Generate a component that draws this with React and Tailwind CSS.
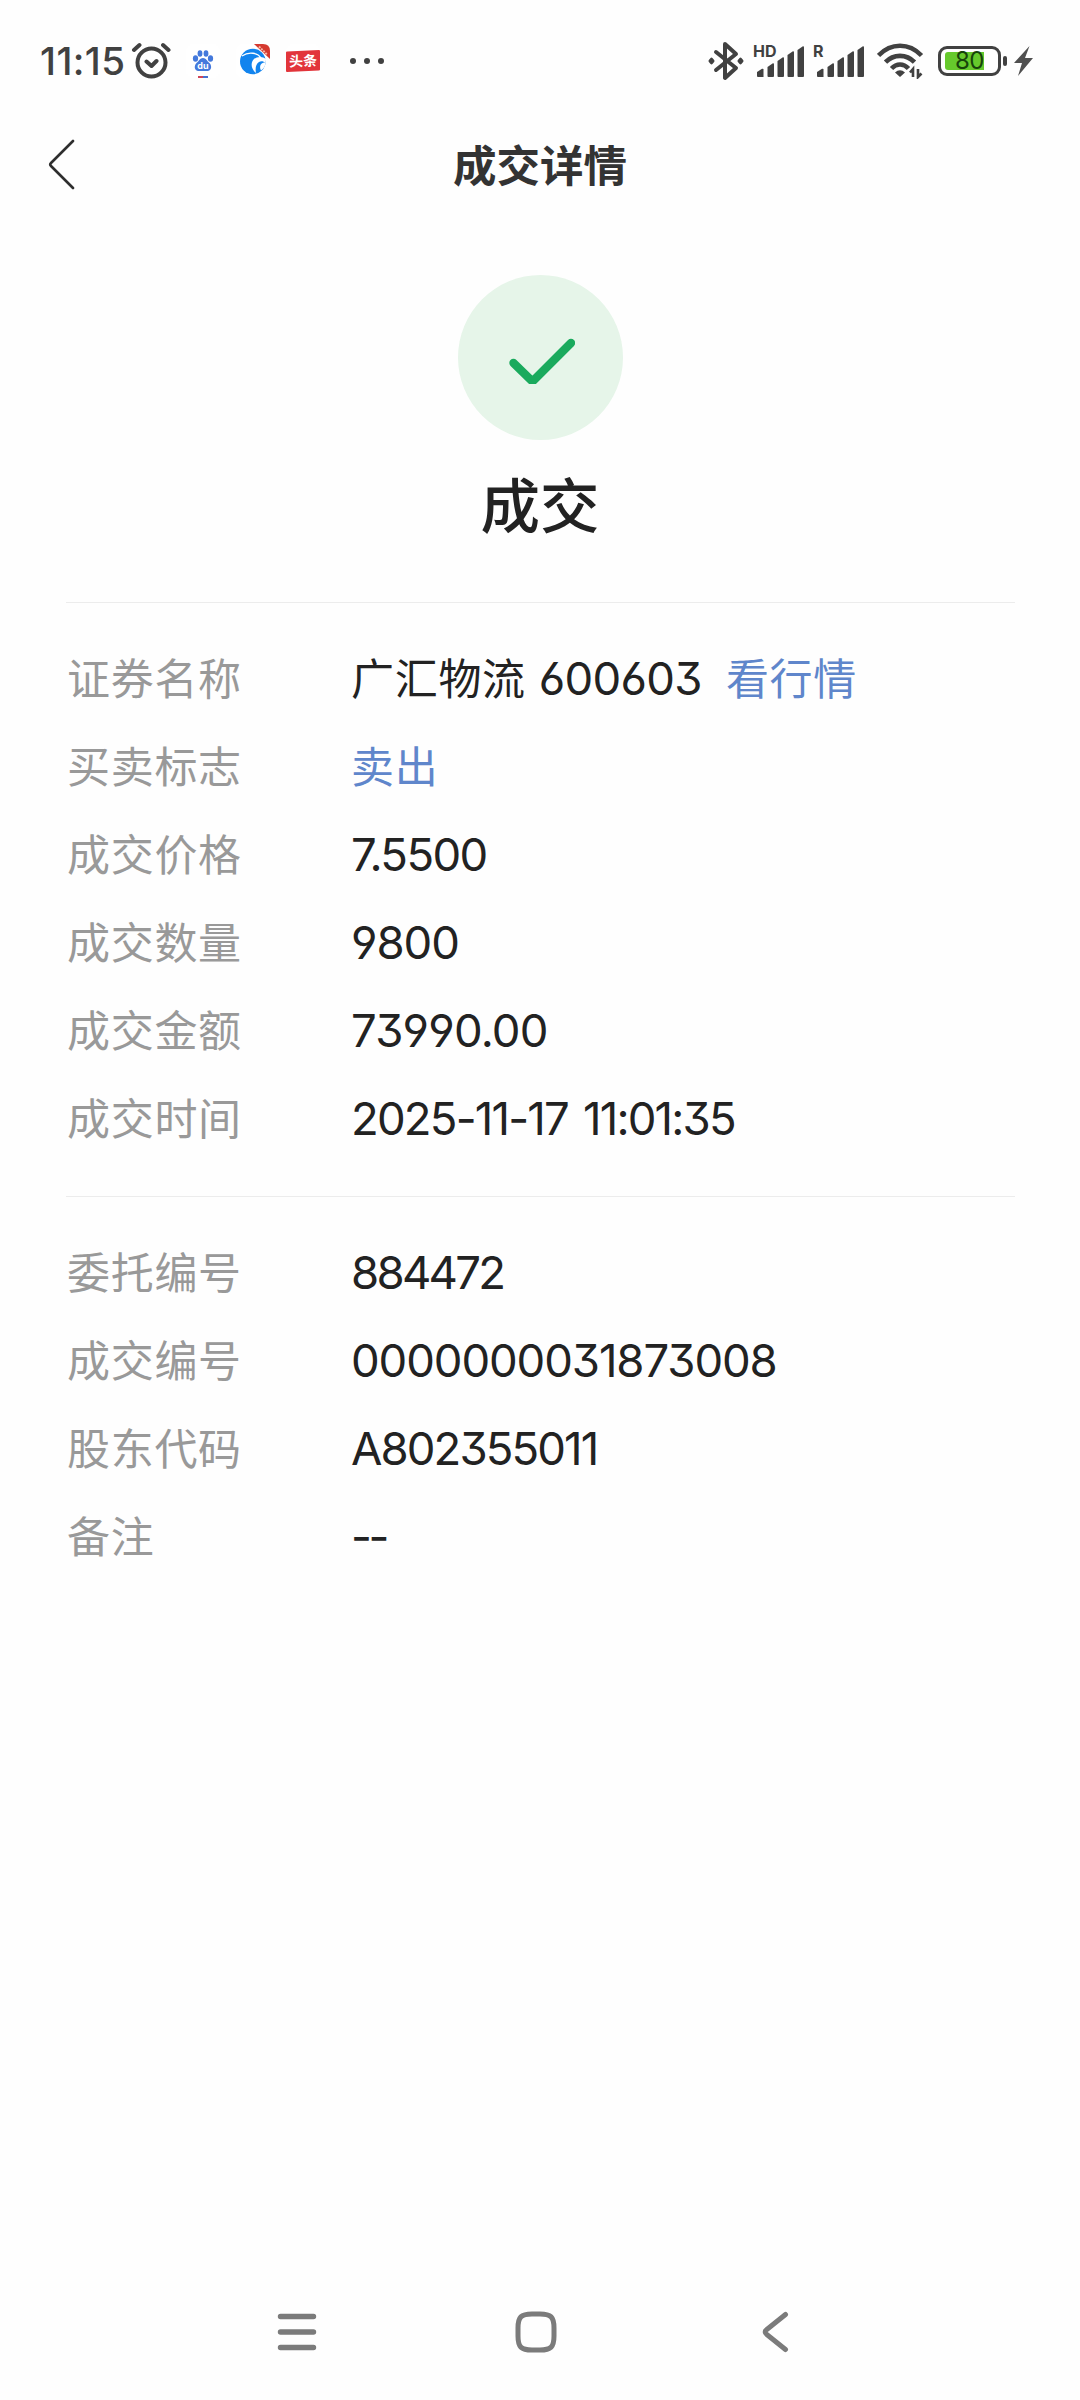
const tradeRows = [
  { label: '成交价格', value: '7.5500', tracking: 'tracking-[-1.600px]' },
  { label: '成交数量', value: '9800', tracking: 'tracking-[-1px]' },
  { label: '成交金额', value: '73990.00', tracking: 'tracking-[-0.800px]' },
  { label: '成交时间', value: '2025-11-17 11:01:35', tracking: 'tracking-[-1.800px] [word-spacing:4px]' },
];

const orderRows = [
  { label: '委托编号', value: '884472', tracking: 'tracking-[-2.700px]' },
  { label: '成交编号', value: '0000000031873008', tracking: 'tracking-[-1.100px]' },
  { label: '股东代码', value: 'A802355011', tracking: 'tracking-[-1.900px]' },
  { label: '备注', value: '--', tracking: 'tracking-[-3.500px]' },
];

function SignalIcon({ label, className }) {
  return (
    <svg className={className} width="50" height="36" viewBox="0 0 50 36" fill="#414141">
      <text x="-3" y="14" fontSize="16" fontWeight="700" fontFamily="Inter, sans-serif">{label}</text>
      <path d="M1 29l5-3.200q1.500-.5 1.500 .8V34H2q-1 0-1-1z" />
      <path d="M11.500 24l5-3.500q1.500-.5 1.500 .8V33q0 1-1 1h-4.500q-1 0-1-1z" />
      <path d="M21.500 18l5-3.500q1.500-.5 1.500 .8V33q0 1-1 1h-4.500q-1 0-1-1z" />
      <path d="M31.500 12l5-3.500q1.500-.5 1.500 .8V33q0 1-1 1h-4.500q-1 0-1-1z" />
      <path d="M41.500 7l5-3.500q1.500-.5 1.500 .8V33q0 1-1 1h-4.500q-1 0-1-1z" />
    </svg>
  );
}

function StatusBar() {
  return (
    <div className="flex h-[122px] items-center justify-between pl-10 pr-[46px] text-[#414141]">
      <div className="flex items-center">
        <span className="w-[91px] whitespace-nowrap text-[38.500px] font-medium leading-none tracking-[0.400px]">11:15</span>
        <svg width="40" height="38" viewBox="0 0 40 38" fill="none" stroke="#414141" strokeWidth="4" strokeLinecap="round" strokeLinejoin="round">
          <circle cx="20.500" cy="20.500" r="14" />
          <path d="M15.500 19.500l5 4.500 5-5M3 8l5.500-5M32 3l5.500 5" />
        </svg>
        <svg className="ml-[15px]" width="34" height="34" viewBox="0 0 34 34">
          <rect width="34" height="34" rx="7" fill="#fff" />
          <g fill="#4479dc">
            <ellipse cx="9.500" cy="14.500" rx="2.600" ry="3.200" />
            <ellipse cx="14" cy="9.500" rx="2.400" ry="3.300" />
            <ellipse cx="20" cy="9.500" rx="2.400" ry="3.300" />
            <ellipse cx="24.500" cy="14.500" rx="2.600" ry="3.200" />
            <path d="M17 14c3 0 4 3 6.500 5 2.500 2.300 2.300 7.500-1.500 8H12c-4-.5-4-5.700-1.500-8C13 17 14 14 17 14z" />
          </g>
          <text x="17" y="25" textAnchor="middle" fill="#fff" fontSize="9" fontWeight="700" fontFamily="Inter, sans-serif">du</text>
          <path d="M12 32h5v2h-5z" fill="#d04458" />
          <path d="M17 32h5v2h-5z" fill="#4670d0" />
        </svg>
        <svg className="ml-4" width="34" height="34" viewBox="0 0 34 34">
          <rect width="34" height="34" rx="7" fill="#fff" />
          <circle cx="16.800" cy="17.500" r="12.800" fill="#1284ee" />
          {/* outer wave, then the inner curl that opens to the right */}
          <path d="M6 12c7-5 16-3 19 2" fill="none" stroke="#fff" strokeWidth="1.300" />
          <path d="M30 15c-4-3.500-11-2.500-13.500 2-2 4-.5 8.500 3.500 12 -1-5 0-9 3-11 2-1.300 4.500-1 6.500 1z" fill="#fff" />
          <path d="M29.500 18.500c-2 0-4 .5-5 2.500-.8 2-.3 4 .5 5.500 3-2 4.500-5 4.500-8z" fill="#fff" />
          <path d="M18 0h9q7 0 7 7v8z" fill="#d5392f" />
          <path d="M23 2.500l8.500 8.500" stroke="#f4b6a8" strokeWidth="2" strokeDasharray="2 1" />
        </svg>
        <svg className="ml-4" width="34" height="34" viewBox="0 0 34 34">
          <rect width="34" height="34" rx="7" fill="#fff" />
          <path d="M0 8.500Q0 7.500 1 7.400L33 6q1 0 1 1v18.500q0 1-1 1L1 28q-1 0-1-1z" fill="#e2353b" />
          <text x="17" y="22" textAnchor="middle" fill="#fff" fontSize="14" fontWeight="700" fontFamily="Noto Sans CJK SC, sans-serif" transform="rotate(-2 17 17)">头条</text>
        </svg>
        <svg className="ml-[30px]" width="36" height="8" viewBox="0 0 36 8" fill="#414141">
          <circle cx="3" cy="4" r="3" />
          <circle cx="17" cy="4" r="3" />
          <circle cx="31" cy="4" r="3" />
        </svg>
      </div>
      <div className="flex items-center">
        <svg width="36" height="40" viewBox="0 0 36 40" fill="none" stroke="#414141" strokeWidth="4" strokeLinecap="round" strokeLinejoin="round">
          <path d="M8 11l20 16-11 10V3l11 10L8 29" />
          <path d="M3.500 18.200l1.500 1.800-1.500 1.800L2 20zM32.500 18.200l1.500 1.800-1.500 1.800L31 20z" strokeWidth="3" />
        </svg>
        <SignalIcon label="HD" className="ml-[12px] overflow-visible" />
        <SignalIcon label="R" className="ml-[10px] overflow-visible" />
        <svg className="ml-[11px]" width="47" height="36" viewBox="0 0 47 36" fill="none" stroke="#414141" strokeWidth="4.600">
          <path d="M1.500 12.500C14-.5 32-.5 44.500 12.500M8.500 19.200c8-8.500 21-8.500 29 0M14.500 25.500c5-5.300 12-5.300 17 0" />
          <path d="M18 29.500q5-4.500 10 0l-5 4.500z" fill="#414141" stroke="none" />
          <path d="M36 34V26l-3 3.500M41 26v8l3.500-3.500" strokeWidth="2.600" />
        </svg>
        <div className="ml-[14px] flex h-[30px] w-[63px] items-center rounded-[9px] border-[3px] border-[#414141] pl-1">
          <div className="flex h-[18px] w-[39px] items-center justify-end rounded-l-[3px] bg-[#66c92c] text-[24px] leading-none tracking-[-0.5px] text-[#16430a]">80</div>
        </div>
        <div className="ml-[2px] h-[10px] w-1 rounded-sm bg-[#414141]" />
        <svg className="ml-[7px]" width="20" height="30" viewBox="0 0 20 30" fill="#505050">
          <path d="M15.500 0L0 17h8L4 30l15-18h-8z" />
        </svg>
      </div>
    </div>
  );
}

function Header() {
  return (
    <div className="grid h-[84px] grid-cols-[1fr_auto_1fr] items-center pl-12">
      <svg width="28" height="52" viewBox="0 0 28 52" fill="none" stroke="#2e2e2e" strokeWidth="2.600" strokeLinecap="round" strokeLinejoin="round">
        <path d="M25 3L3 25q-1.500 1.500 0 3L25 50" />
      </svg>
      <h1 className="-ml-12 pt-1 text-[43.500px] font-bold leading-[60px] text-[#333]">成交详情</h1>
    </div>
  );
}

function Result() {
  return (
    <div className="flex flex-col items-center pt-[69px]">
      <div className="flex size-[165px] items-center justify-center rounded-full bg-[#e6f5e9]">
        <svg width="70" height="52" viewBox="0 0 70 52" fill="none" stroke="#1aaa5d" strokeWidth="8.400" strokeLinecap="round" strokeLinejoin="round">
          <path d="M8.500 31L27.500 49.500 66 11" />
        </svg>
      </div>
      <p className="mt-[23px] h-[139px] text-[59.500px] font-medium leading-[86px] text-[#222]">成交</p>
    </div>
  );
}

function Row({ label, children }) {
  return (
    <div className="flex h-[88px] items-center text-[43px] leading-[60px]">
      <span className="w-[285px] shrink-0 pl-px tracking-[0.700px] text-[#999]">{label}</span>
      <span className="flex items-center whitespace-nowrap text-[#222]">{children}</span>
    </div>
  );
}

function Digits({ tracking, children }) {
  return (
    <span className={`text-[45.500px] [font-feature-settings:'cv03','cv04','cv09'] ${tracking}`}>{children}</span>
  );
}

function NavBar() {
  return (
    <div className="flex h-[136px] items-center pl-[277px] text-[#7b7b7b]">
      <svg width="40" height="42" viewBox="0 0 40 42" stroke="currentColor" strokeWidth="5.400" strokeLinecap="round">
        <path d="M3.500 5.500h33M3.500 21h33M3.500 36.500h33" />
      </svg>
      <svg className="ml-[198px]" width="42" height="42" viewBox="0 0 42 42" fill="none" stroke="currentColor" strokeWidth="5">
        <path d="M21 3h4C36 3 39 6 39 17v8c0 11-3 14-14 14h-8C6 39 3 36 3 25v-8C3 6 6 3 17 3z" />
      </svg>
      <svg className="ml-[205px]" width="28" height="42" viewBox="0 0 28 42" fill="none" stroke="currentColor" strokeWidth="5" strokeLinecap="round">
        <path d="M23.500 3.500L4.800 18.500q-3.200 2.500 0 5L23.500 38.500" />
      </svg>
    </div>
  );
}

export default function App() {
  return (
    <div className="flex h-[2400px] w-[1080px] flex-col bg-[#fefefe] font-['Inter','Noto_Sans_CJK_SC',sans-serif]">
      <StatusBar />
      <Header />
      <Result />
      <main className="ml-[66px] mr-[65px] flex-1">
        <section className="border-t border-[#ececec] pb-[33px] pt-8">
          <Row label="证券名称">
            <span className="tracking-[0.700px]">广汇物流</span>
            <span className="ml-[13px] flex"><Digits tracking="tracking-[-0.700px]">600603</Digits></span>
            <a className="ml-6 tracking-[0.700px] text-[#5f86cb]">看行情</a>
          </Row>
          <Row label="买卖标志">
            <span className="tracking-[0.700px] text-[#5f86cb]">卖出</span>
          </Row>
          {tradeRows.map((row) => (
            <Row key={row.label} label={row.label}><Digits tracking={row.tracking}>{row.value}</Digits></Row>
          ))}
        </section>
        <section className="border-t border-[#ececec] pt-8">
          {orderRows.map((row) => (
            <Row key={row.label} label={row.label}><Digits tracking={row.tracking}>{row.value}</Digits></Row>
          ))}
        </section>
      </main>
      <NavBar />
    </div>
  );
}
